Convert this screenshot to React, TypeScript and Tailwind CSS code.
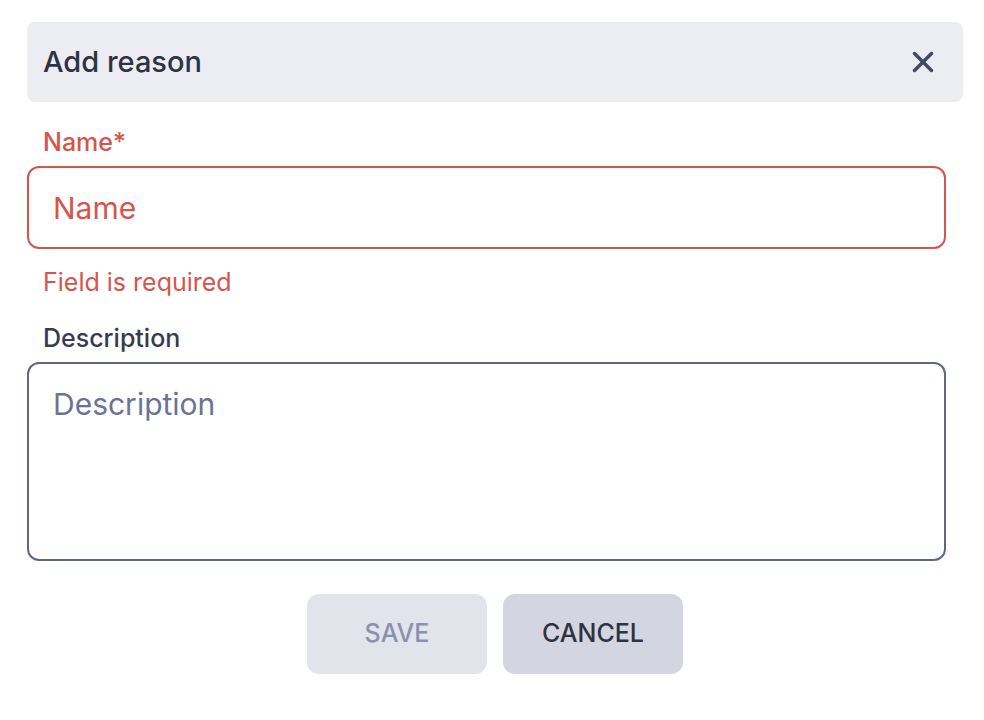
export default function App() {
  return (
    <div className="min-h-screen bg-white font-['Inter',sans-serif] pt-[22px]">
      <div className="ml-[27px] w-[936px] flex flex-col">
        {/* Header */}
        <div className="h-[80px] rounded-lg bg-[#ecedf2] flex items-center justify-between pl-4 pr-[29px]">
          <h2 className="text-[29px] font-medium leading-9 text-[#2d3244]">Add reason</h2>
          <button className="w-[22px] h-[22px] flex items-center justify-center text-[#444a5f]">
            <svg width="22" height="22" viewBox="0 0 22 22" fill="none" stroke="currentColor" strokeWidth="3.5" strokeLinecap="round">
              <path d="M2.5 2.5 19.5 19.5" />
              <path d="M19.5 2.5 2.5 19.5" />
            </svg>
          </button>
        </div>

        {/* Name */}
        <label className="mt-[25px] ml-4 h-[30px] text-[25px] font-medium leading-[30px] text-[#d6544d]">Name*</label>
        <input
          placeholder="Name"
          className="mt-[9px] mr-[17px] h-[83px] rounded-xl border-2 border-[#d6544d] pl-6 text-[30px] text-[#d6544d] placeholder:text-[#d6544d] outline-none"
        />
        <p className="mt-[18px] ml-4 h-[30px] text-[25px] leading-[30px] text-[#d6544d]">Field is required</p>

        {/* Description */}
        <label className="mt-[26px] ml-4 h-[30px] text-[25px] font-medium leading-[30px] text-[#353b50]">Description</label>
        <textarea
          placeholder="Description"
          className="mt-[9px] mr-[17px] h-[199px] resize-none rounded-xl border-2 border-[#5f6787] pl-6 pt-[22px] text-[30px] leading-9 text-[#353b50] placeholder:text-[#6b7394] outline-none"
        />

        {/* Actions */}
        <div className="mt-[33px] flex justify-center gap-4">
          <button disabled className="w-[180px] h-[80px] rounded-xl bg-[#e2e4eb] text-[25px] font-medium text-[#8a90ad]">SAVE</button>
          <button className="w-[180px] h-[80px] rounded-xl bg-[#d3d5e0] text-[25px] font-medium text-[#2d3244]">CANCEL</button>
        </div>
      </div>
    </div>
  )
}
